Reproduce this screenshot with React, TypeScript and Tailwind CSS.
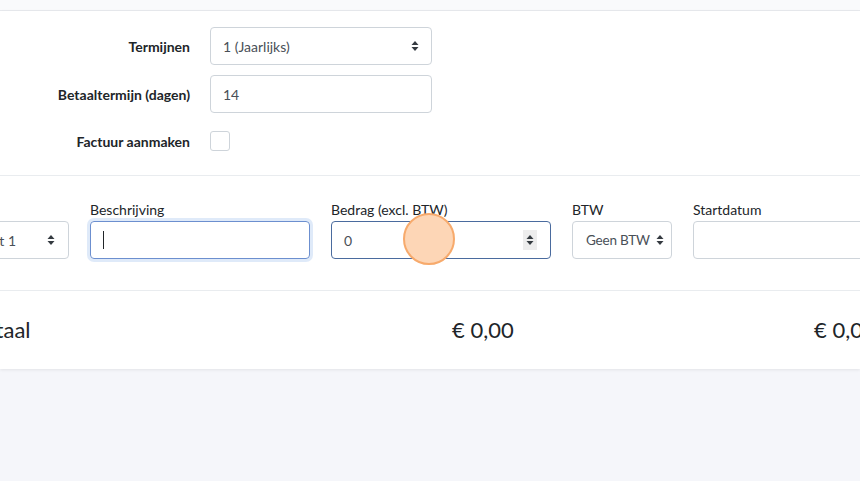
import React from "react";

const font = { fontFamily: '"Source Sans Pro", Lato, "Noto Sans", sans-serif' };

function Arrows() {
  return (
    <svg width="8" height="12" viewBox="0 0 8 12" className="shrink-0">
      <path d="M4 1 L7.5 5 L0.5 5 Z" fill="#343a40" />
      <path d="M4 11 L7.5 7 L0.5 7 Z" fill="#343a40" />
    </svg>
  );
}

export default function App() {
  return (
    <div className="min-h-[481px] w-[860px] overflow-hidden bg-[#f5f6fa] text-[#212529]" style={font}>
      <div className="h-[11px] border-b border-[#e8eaee] bg-[#f9fafc]" />
      <div className="bg-white shadow-[0_1px_3px_rgba(0,0,0,0.08)]">
        {/* top form */}
        <div className="flex flex-col pt-[16px] pb-[24px]">
          <div className="flex items-center h-[38px]">
            <div className="w-[190px] text-right text-[14px] font-bold">Termijnen</div>
            <div className="ml-[20px] w-[222px] h-[38px] flex items-center justify-between rounded-[4px] border border-[#ced4da] px-[12px] text-[14px] text-[#495057]">
              <span>1 (Jaarlijks)</span>
              <Arrows />
            </div>
          </div>
          <div className="flex items-center h-[38px] mt-[10px]">
            <div className="w-[190px] text-right text-[14px] font-bold">Betaaltermijn (dagen)</div>
            <div className="ml-[20px] w-[222px] h-[38px] flex items-center rounded-[4px] border border-[#ced4da] px-[12px] text-[14px] text-[#495057]">
              14
            </div>
          </div>
          <div className="flex items-center h-[20px] mt-[18px]">
            <div className="w-[190px] text-right text-[14px] font-bold">Factuur aanmaken</div>
            <div className="ml-[20px] w-[20px] h-[20px] rounded-[3px] border border-[#ced4da] bg-white" />
          </div>
        </div>
        {/* line items */}
        <div className="border-t border-[#e9ecef] pt-[23px] pb-[31px]">
          <div className="flex gap-[21px] ml-[-57px]">
            <div className="w-[126px] shrink-0">
              <div className="h-[21px] text-[14px] leading-[21px]">Product</div>
              <div className="mt-[1px] h-[38px] flex items-center justify-between rounded-[4px] border border-[#ced4da] pl-[12px] pr-[13px] text-[14px] text-[#495057] whitespace-nowrap">
                <span>Product 1</span>
                <Arrows />
              </div>
            </div>
            <div className="w-[220px] shrink-0">
              <div className="h-[21px] text-[14px] leading-[21px]">Beschrijving</div>
              <div className="mt-[1px] h-[38px] flex items-center rounded-[4px] border border-[#6c8fcf] px-[12px] shadow-[0_0_0_3px_rgba(128,170,230,0.25)]">
                <span className="block w-px h-[18px] bg-[#212529]" />
              </div>
            </div>
            <div className="w-[220px] shrink-0 relative">
              <div className="h-[21px] text-[14px] leading-[21px]">Bedrag (excl. BTW)</div>
              <div className="mt-[1px] h-[38px] flex items-center justify-between rounded-[4px] border border-[#4a6b9e] pl-[12px] pr-[13px] text-[14px] text-[#495057]">
                <span>0</span>
                <span className="flex h-[20px] w-[14px] items-center justify-center bg-[#ededed]">
                  <Arrows />
                </span>
              </div>
              <div className="absolute left-[72px] top-[14px] w-[52px] h-[52px] rounded-full border-2 border-[#f7aa6c] bg-[#fdd6b6]" />
            </div>
            <div className="w-[100px] shrink-0">
              <div className="h-[21px] text-[14px] leading-[21px]">BTW</div>
              <div className="mt-[1px] h-[38px] flex items-center justify-between rounded-[4px] border border-[#ced4da] pl-[13px] pr-[7px] text-[13.5px] tracking-[-0.2px] text-[#495057] whitespace-nowrap">
                <span>Geen BTW</span>
                <Arrows />
              </div>
            </div>
            <div className="w-[220px] shrink-0">
              <div className="h-[21px] text-[14px] leading-[21px]">Startdatum</div>
              <div className="mt-[1px] h-[38px] rounded-[4px] border border-[#ced4da]" />
            </div>
          </div>
        </div>
        {/* totals */}
        <div className="border-t border-[#e9ecef] h-[79px] flex items-center pb-[2px]">
          <div className="flex ml-[-27px] text-[22px] text-[#212529] whitespace-nowrap">
            <span className="w-[479px] shrink-0">Totaal</span>
            <span className="w-[362px] shrink-0">€ 0,00</span>
            <span className="shrink-0">€ 0,00</span>
          </div>
        </div>
      </div>
    </div>
  );
}
